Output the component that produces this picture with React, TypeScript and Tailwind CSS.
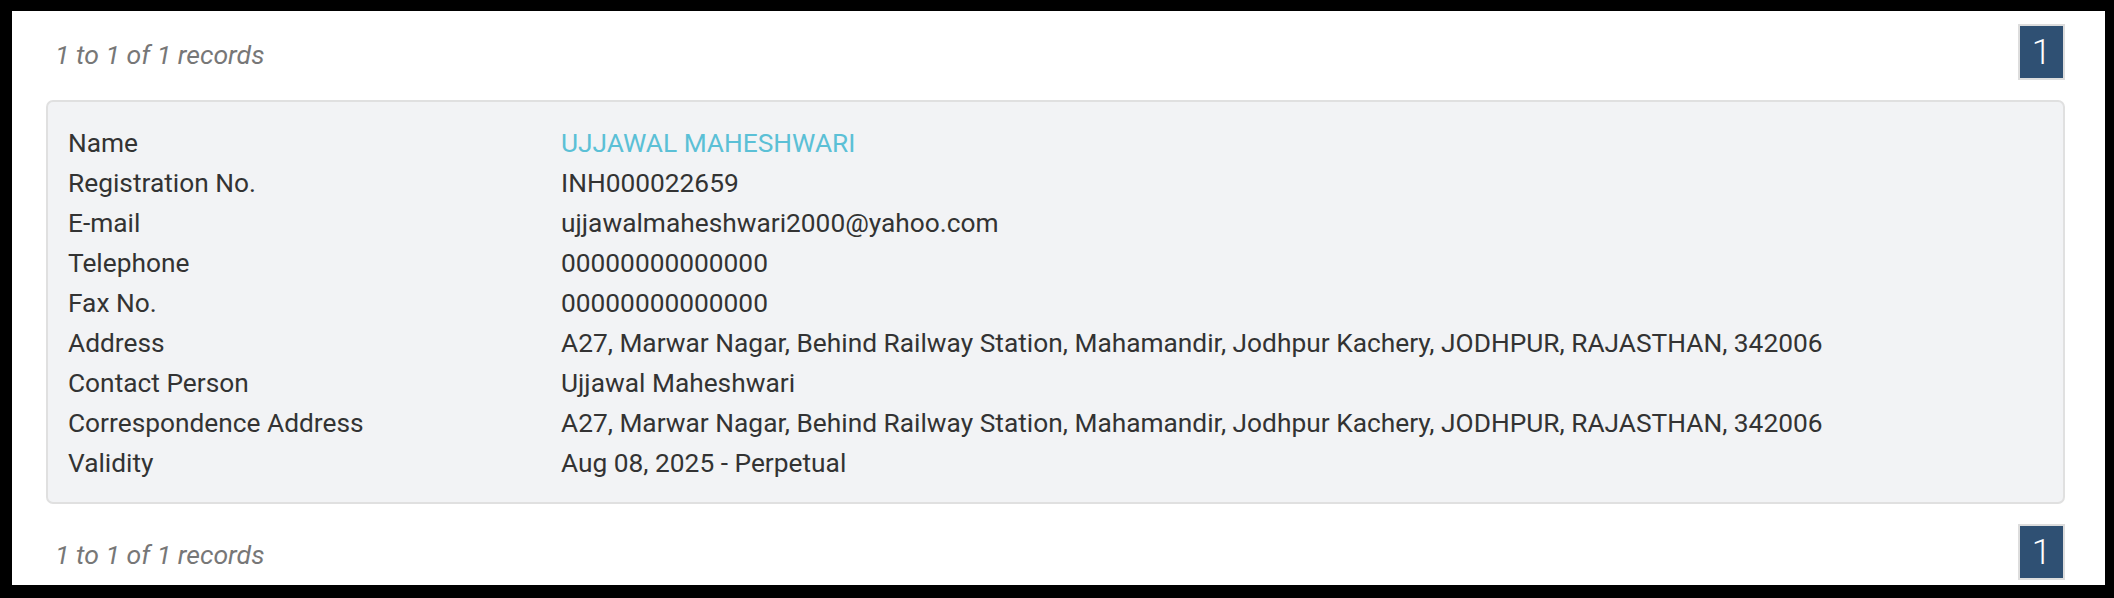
const rows: { label: string; value: string; accent?: boolean }[] = [
  { label: "Name", value: "UJJAWAL MAHESHWARI", accent: true },
  { label: "Registration No.", value: "INH000022659" },
  { label: "E-mail", value: "ujjawalmaheshwari2000@yahoo.com" },
  { label: "Telephone", value: "00000000000000" },
  { label: "Fax No.", value: "00000000000000" },
  {
    label: "Address",
    value:
      "A27, Marwar Nagar, Behind Railway Station, Mahamandir, Jodhpur Kachery, JODHPUR, RAJASTHAN, 342006",
  },
  { label: "Contact Person", value: "Ujjawal Maheshwari" },
  {
    label: "Correspondence Address",
    value:
      "A27, Marwar Nagar, Behind Railway Station, Mahamandir, Jodhpur Kachery, JODHPUR, RAJASTHAN, 342006",
  },
  { label: "Validity", value: "Aug 08, 2025 - Perpetual" },
];

function Pager() {
  return (
    <div className="flex items-center justify-between h-[56px]">
      <span className="pl-[9px] pt-[5px] italic text-[26.6px] leading-[40px] text-[#777777]">
        1 to 1 of 1 records
      </span>
      <span className="flex items-center justify-center w-[47px] h-[56px] border-2 border-[#dddddd] bg-[#2f5073] text-white text-[35px] leading-none font-light">
        1
      </span>
    </div>
  );
}

export default function App() {
  return (
    <div className="h-[598px] w-full bg-white border-black border-l-[12px] border-t-[11px] border-r-[9px] border-b-[13px] font-[Roboto,Arial,sans-serif]">
      <div className="pl-[34px] pr-[40px] pt-[13px]">
        <Pager />

        {/* Record card */}
        <div className="mt-[20px] h-[404px] rounded-[7px] border-2 border-[#e0e0e0] bg-[#f2f3f5] pl-[20px] pt-[21px]">
          <div className="grid grid-cols-[493px_1fr] text-[26.3px] leading-[40px] text-[#333333]">
            {rows.map((r) => (
              <div key={r.label} className="contents">
                <div>{r.label}</div>
                <div className={r.accent ? "text-[#5bc0d6]" : ""}>{r.value}</div>
              </div>
            ))}
          </div>
        </div>

        <div className="mt-[20px]">
          <Pager />
        </div>
      </div>
    </div>
  );
}
